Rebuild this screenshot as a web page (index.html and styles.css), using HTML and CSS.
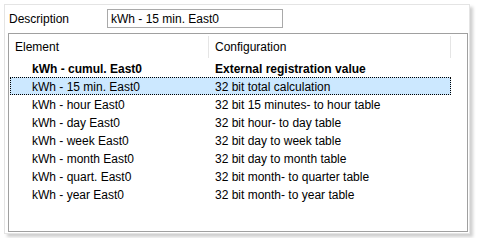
FILE: index.html
```html
<!DOCTYPE html>
<html lang="en">
<head>
  <meta charset="UTF-8">
  <title>Element configuration</title>
  <link rel="stylesheet" href="styles.css">
</head>
<body>
  <div class="panel">
    <!-- Description -->
    <div class="desc-row">
      <label class="desc-label" for="desc">Description</label>
      <input id="desc" class="desc-input" type="text" value="kWh - 15 min. East0">
    </div>

    <!-- Element list -->
    <div class="list">
      <div class="list-head">
        <div class="head-cell">Element</div>
        <div class="head-cell">Configuration</div>
        <div class="head-rest"></div>
      </div>
      <div class="row bold">
        <div class="cell first">kWh - cumul. East0</div>
        <div class="cell">External registration value</div>
      </div>
      <div class="row selected">
        <div class="cell first">kWh - 15 min. East0</div>
        <div class="cell">32 bit total calculation</div>
      </div>
      <div class="row">
        <div class="cell first">kWh - hour East0</div>
        <div class="cell">32 bit 15 minutes- to hour table</div>
      </div>
      <div class="row">
        <div class="cell first">kWh - day East0</div>
        <div class="cell">32 bit hour- to day table</div>
      </div>
      <div class="row">
        <div class="cell first">kWh - week East0</div>
        <div class="cell">32 bit day to week table</div>
      </div>
      <div class="row">
        <div class="cell first">kWh - month East0</div>
        <div class="cell">32 bit day to month table</div>
      </div>
      <div class="row">
        <div class="cell first">kWh - quart. East0</div>
        <div class="cell">32 bit month- to quarter table</div>
      </div>
      <div class="row">
        <div class="cell first">kWh - year East0</div>
        <div class="cell">32 bit month- to year table</div>
      </div>
    </div>
  </div>
</body>
</html>
```

FILE: styles.css
```css
/* ======= Base ======= */
body {
  margin: 0;
  padding: 4px;
  background: #fff;
  font-family: "Liberation Sans", Arial, sans-serif;
  font-size: 12px;
  color: #000;
}

/* Panel with soft frame */
.panel {
  width: 466px;
  height: 230px;
  box-sizing: border-box;
  border: 1px solid #e4e4e4;
  box-shadow: 3px 3px 3px #d0d0d0;
  background: #fff;
  padding: 4px 1px 0 3px;
}

/* Description line */
.desc-row {
  display: flex;
  align-items: center;
  height: 19px;
}

.desc-label {
  width: 98px;
  padding-left: 1px;
}

.desc-input {
  width: 176px;
  height: 19px;
  box-sizing: border-box;
  margin: 0;
  padding: 0 3px;
  border: 1px solid #a9a9a9;
  font: inherit;
  color: #000;
  background: #fff;
  outline: none;
}

/* List box */
.list {
  margin-top: 5px;
  height: 199px;
  box-sizing: border-box;
  border: 1px solid #a0a0a0;
}

.list-head {
  display: grid;
  grid-template-columns: 200px 242px 1fr;
  height: 25px;
}

.head-cell,
.head-rest {
  margin-top: 2px;
  height: 22px;
  line-height: 22px;
  padding-left: 6px;
  border-right: 1px solid #e5e5e5;
}

.head-rest {
  border-right: none;
}

.row {
  display: grid;
  grid-template-columns: 200px 242px;
  height: 18px;
  box-sizing: border-box;
}

.cell {
  padding: 1px 0 0 6px;
  line-height: 18px;
  height: 18px;
  box-sizing: border-box;
  white-space: nowrap;
}

.cell.first {
  padding-left: 23px;
}

.row.bold {
  font-weight: bold;
}

.row.selected {
  grid-template-columns: 199px 242px;
  margin-left: 1px;
  width: 441px;
  background: #cce8ff;
  outline: 1px dotted #000;
  outline-offset: -1px;
}

.row.selected .cell.first {
  padding-left: 22px;
}
```
